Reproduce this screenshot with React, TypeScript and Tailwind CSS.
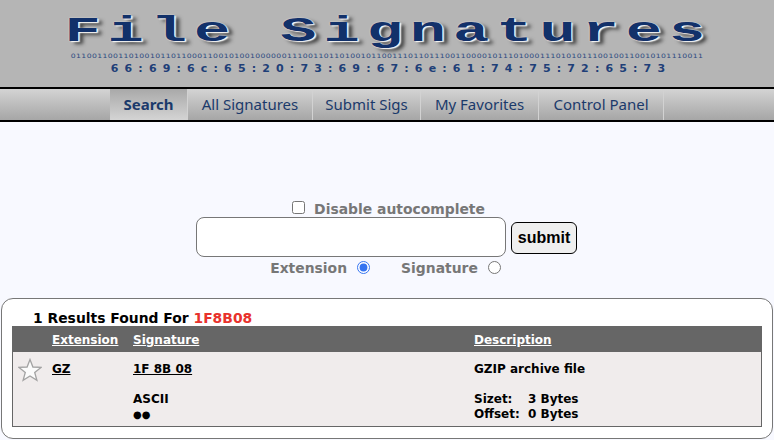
const BINARY = "0110011001101001011011000110010100100000011100110110100101100111011011100110000101110100011101010111001001100101" + "01110011";
const HEX = "66:69:6c:65:20:73:69:67:6e:61:74:75:72:65:73";
const NAV = ["Search", "All Signatures", "Submit Sigs", "My Favorites", "Control Panel"];
const NAV_W = ["w-[78px]", "w-[125px]", "w-[108px]", "w-[118px]", "w-[125px]"];

function Star() {
  return (
    <svg width="24" height="24" viewBox="0 0 24 24" className="shrink-0">
      <path d="M12 1.5 L14.9 9 L23 9.4 L16.7 14.5 L18.9 22.4 L12 18 L5.1 22.4 L7.3 14.5 L1 9.4 L9.1 9 Z" fill="#fbfbfb" stroke="#a3a3a3" strokeWidth="1.3" />
    </svg>
  );
}

export default function App() {
  return (
    <div className="h-[440px] w-[774px] overflow-hidden bg-[#f8f9ff] font-['DejaVu_Sans',sans-serif] font-bold text-[12px] text-black">
      <header className="flex h-[87px] flex-col items-center overflow-hidden bg-[#b5b5b5] font-['Liberation_Mono',monospace]">
        <div className="mt-[11px] ml-[3px] h-[42px] whitespace-pre text-[35px] leading-[42px] tracking-[4.1px] text-[#12316a] scale-x-[1.72] [text-shadow:0_0_1px_#fff,1px_1px_1px_#fff,3px_3px_3px_#444]">
          File Signatures
        </div>
        <div className="-mt-[1px] h-[8px] whitespace-pre text-[6px] leading-[8px] font-normal text-[#2c4a80] scale-x-[1.28] tracking-[0.3px] font-['DejaVu_Sans',sans-serif]">
          {BINARY}
        </div>
        <div className="mt-[2px] ml-[8px] whitespace-pre text-[11px] leading-[14px] tracking-[6.15px] text-[#1f3f78] font-['DejaVu_Sans',sans-serif]">
          {HEX}
        </div>
      </header>
      <nav className="flex h-[35px] border-y-2 border-black bg-gradient-to-b from-[#d4d4d4] to-[#a6a6a6] pl-[110px] font-['Noto_Sans',sans-serif] text-[15px] font-normal text-[#1b3a6b]">
        {NAV.map((item, i) => (
          <a
            key={item}
            className={`flex items-center justify-center border-r border-[#d2d2d2] pb-[1px] ${NAV_W[i]} ${i === 0 ? "bg-gradient-to-b from-[#a9a9a9] to-[#d4d4d4] font-bold" : ""}`}
          >
            {item}
          </a>
        ))}
      </nav>
      <form className="mt-[78px] flex h-[97px] flex-col items-center text-[13.9px] text-[#777]">
        <label className="flex h-[17px] items-center pl-[3px] leading-[17px]">
          <input type="checkbox" className="mr-[9px] -mt-[2px] size-[13px]" />
          <span className="mt-[1px]">Disable autocomplete</span>
        </label>
        <div className="-ml-[1px] flex items-center gap-[5px]">
          <input type="text" className="h-[40px] w-[310px] rounded-[8px] border border-[#777] bg-white" />
          <button type="button" className="mt-[2px] h-[32px] w-[66px] rounded-[6px] border border-black bg-[#efefef] font-['Liberation_Sans',sans-serif] text-[16px] font-bold text-black">
            submit
          </button>
        </div>
        <div className="flex h-[21px] items-center pr-[3px] pt-[2px]">
          <label className="flex items-center">
            Extension
            <input type="radio" name="kind" defaultChecked className="ml-[10px] -mt-[3px] size-[13px] accent-[#3574f0]" />
          </label>
          <label className="ml-[31px] flex items-center">
            Signature
            <input type="radio" name="kind" className="ml-[10px] -mt-[3px] size-[13px]" />
          </label>
        </div>
      </form>
      <section className="mx-[1px] mt-[1px] h-[141px] rounded-[12px] border border-[#777] bg-white px-[10px]">
        <h2 className="h-[27px] pl-[21px] pt-[11px] text-[13.9px] leading-[17px]">
          1 Results Found For <span className="text-[#e8322c]">1F8B08</span>
        </h2>
        <div className="grid h-[26px] grid-cols-[40px_81px_341px_1fr] items-center bg-[#666] pt-[2px] text-white underline">
          <span />
          <span>Extension</span>
          <span>Signature</span>
          <span>Description</span>
        </div>
        <div className="grid h-[75px] grid-cols-[39px_81px_341px_1fr] border border-t-0 border-[#666] bg-[#f0ecec] leading-[15px]">
          <div className="pl-[5px] pt-[6px]"><Star /></div>
          <div className="pt-[10px] underline">GZ</div>
          <div className="flex flex-col pt-[10px]">
            <span className="underline">1F 8B 08</span>
            <span className="mt-[15px]">ASCII</span>
            <span className="text-[10px]">●●</span>
          </div>
          <div className="flex flex-col pt-[10px]">
            <span>GZIP archive file</span>
            <span className="mt-[15px] flex"><span className="w-[54px]">Sizet:</span>3 Bytes</span>
            <span className="flex"><span className="w-[54px]">Offset:</span>0 Bytes</span>
          </div>
        </div>
      </section>
    </div>
  );
}
